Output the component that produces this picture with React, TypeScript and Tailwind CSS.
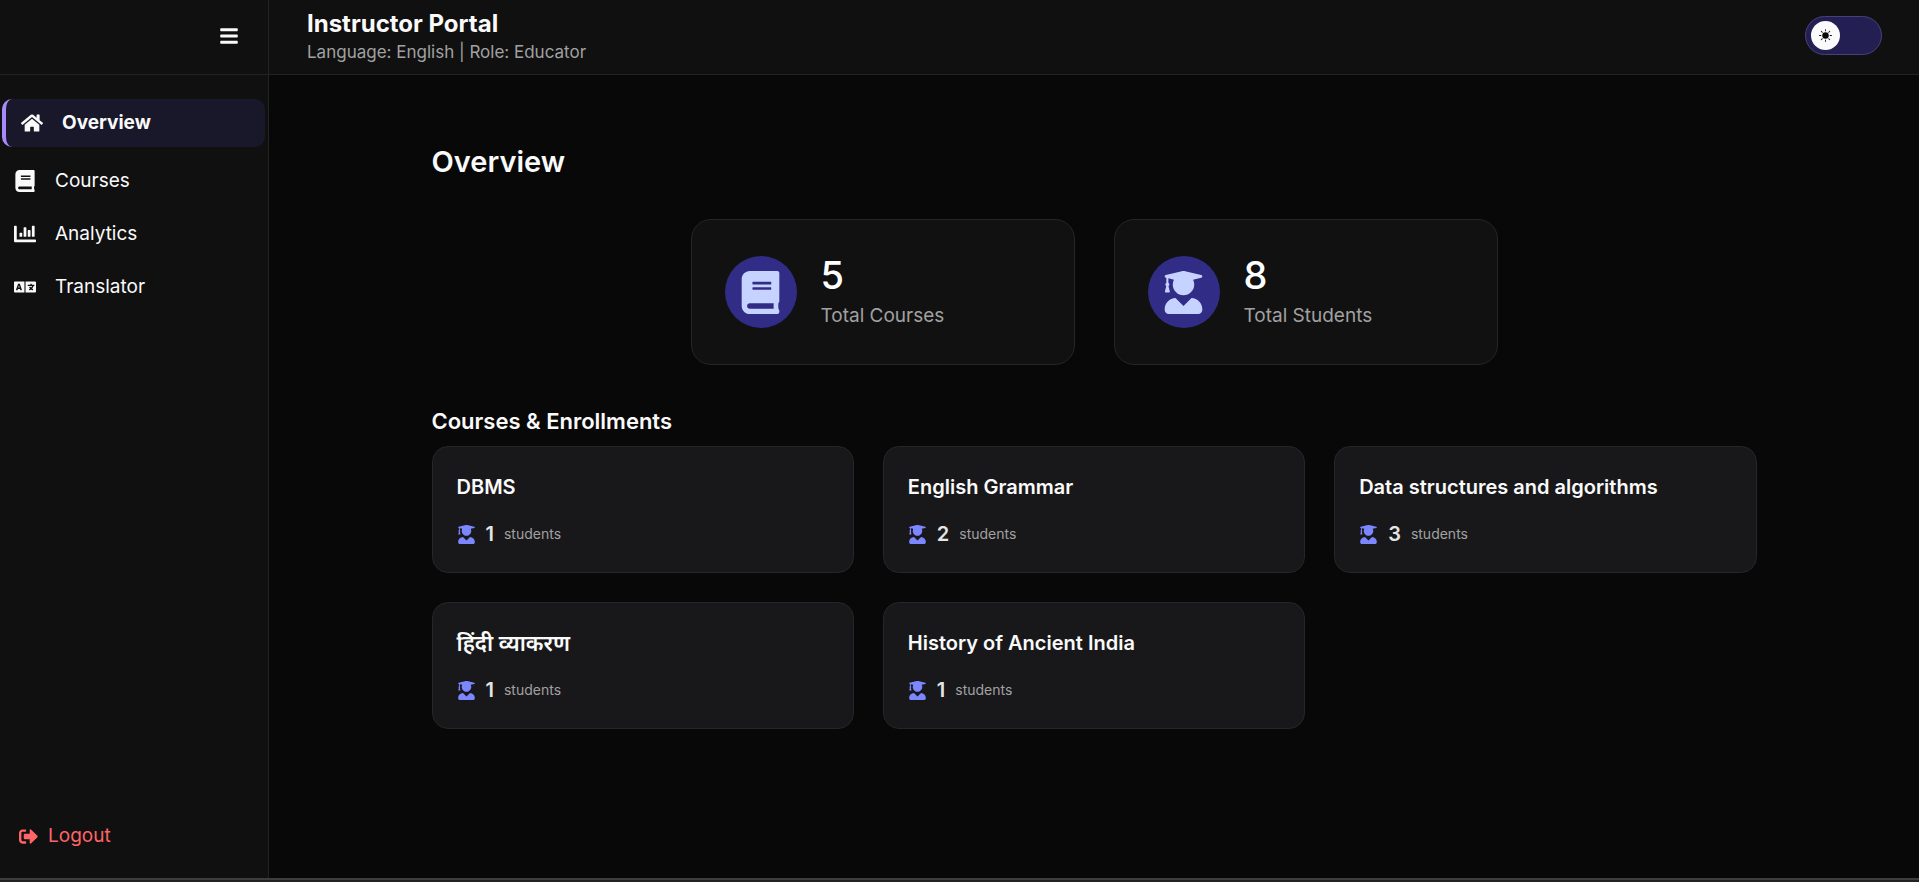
import { useState } from "react";
import {
  FaBars,
  FaBook,
  FaChartBar,
  FaHome,
  FaLanguage,
  FaSignOutAlt,
  FaUserGraduate,
} from "react-icons/fa";
import { BsSunFill } from "react-icons/bs";
import type { IconType } from "react-icons";

const navItems: { label: string; icon: IconType }[] = [
  { label: "Courses", icon: FaBook },
  { label: "Analytics", icon: FaChartBar },
  { label: "Translator", icon: FaLanguage },
];

const stats: { value: number; label: string; icon: IconType }[] = [
  { value: 5, label: "Total Courses", icon: FaBook },
  { value: 8, label: "Total Students", icon: FaUserGraduate },
];

const courses = [
  { title: "DBMS", students: 1 },
  { title: "English Grammar", students: 2 },
  { title: "Data structures and algorithms", students: 3 },
  { title: "हिंदी व्याकरण", students: 1, lang: "hi" },
  { title: "History of Ancient India", students: 1 },
];

function Sidebar() {
  return (
    <aside className="flex w-[269px] shrink-0 flex-col border-r border-[#232323] bg-[#101010]">
      <div className="flex h-[75px] items-center justify-end border-b border-[#232323] px-[29px] pb-[3px]">
        <button type="button" aria-label="Toggle menu" className="text-xl">
          <FaBars />
        </button>
      </div>
      <nav className="flex flex-col gap-2 px-0.5 pt-6 text-[19px] leading-8">
        <a
          href="#overview"
          className="mr-px mb-[3px] flex h-12 items-center gap-[19px] rounded-[10px] border-l-4 border-[#a78bfa] bg-[#18182a] pl-[15px] font-bold"
        >
          <FaHome className="size-[22px]" />
          Overview
        </a>
        {navItems.map(({ label, icon: Icon }) => (
          <a key={label} href={`#${label.toLowerCase()}`} className="flex h-[45px] items-center gap-[19px] pl-3">
            <Icon className="size-[22px]" />
            {label}
          </a>
        ))}
      </nav>
      <button type="button" className="mt-auto mb-[26px] flex items-center gap-2.5 px-[19px] text-[19px] leading-8 text-[#ff6467]">
        <FaSignOutAlt />
        Logout
      </button>
    </aside>
  );
}

function ThemeSwitch() {
  const [light, setLight] = useState(true);
  return (
    <button
      type="button"
      role="switch"
      aria-checked={light}
      aria-label="Theme"
      onClick={() => setLight(!light)}
      className={`mb-1 flex h-[39px] w-[77px] items-center rounded-full border border-[#46417a] bg-[#231f52] px-[5px] ${light ? "justify-start" : "justify-end"}`}
    >
      <span className="flex size-[29px] items-center justify-center rounded-full bg-[#fafafa] text-[#080808]">
        <BsSunFill className="size-[13px]" />
      </span>
    </button>
  );
}

export default function App() {
  return (
    <div className="flex min-h-screen flex-col bg-[#080808] font-['Inter','Noto_Sans',sans-serif] text-[#fafafa]">
      <div className="flex grow">
        <Sidebar />
        <div className="flex grow flex-col">
          <header className="flex h-[75px] items-center justify-between border-b border-[#232323] bg-[#101010] pr-[37px] pl-[38px]">
            <div className="pb-0.5">
              <h1 className="text-2xl leading-8 font-bold">Instructor Portal</h1>
              <p className="text-[17px] leading-6 text-[#a1a1a1]">Language: English | Role: Educator</p>
            </div>
            <ThemeSwitch />
          </header>
          <main className="mx-auto w-full max-w-[1325px] pt-[67px]">
            <h2 className="text-[29px] leading-10 font-semibold">Overview</h2>
            <section className="mt-[37px] flex flex-wrap justify-center gap-[39px]">
              {stats.map(({ value, label, icon: Icon }) => (
                <div
                  key={label}
                  className="flex h-[146px] w-96 items-center gap-6 rounded-[20px] border border-[#262626] bg-[#111111] px-[33px]"
                >
                  <div className="flex size-[72px] items-center justify-center rounded-full bg-[#312c85] text-[#c6d2ff]">
                    <Icon className="size-[43px]" />
                  </div>
                  <div>
                    <div className="text-[38px] leading-[46px] font-medium text-white">{value}</div>
                    <div className="mt-0.5 text-[19px] leading-8 text-[#a1a1a1]">{label}</div>
                  </div>
                </div>
              ))}
            </section>
            <section>
              <h3 className="mt-10 text-[22px] leading-8 font-semibold">Courses &amp; Enrollments</h3>
              <ul className="mt-[9px] grid grid-cols-3 gap-[29px]">
                {courses.map(({ title, students, lang }) => (
                  <li
                    key={title}
                    className="h-[127px] rounded-2xl border border-[#262628] bg-[#18181b] px-6 pt-6"
                  >
                    <h4 lang={lang} className={`leading-8 font-semibold ${lang === "hi" ? "text-[22px]" : "text-xl"}`}>
                      {title}
                    </h4>
                    <p className="mt-[17px] flex items-center gap-2.5 leading-8">
                      <FaUserGraduate className="size-[19px] text-[#7c86ff]" />
                      <span className="text-xl font-semibold text-[#e5e5e5]">{students}</span>
                      <span className="text-sm text-[#a1a1a1]">students</span>
                    </p>
                  </li>
                ))}
              </ul>
            </section>
          </main>
        </div>
      </div>
      <footer className="h-1 border-t-2 border-[#3d3d3d] bg-[#222222]" />
    </div>
  );
}
